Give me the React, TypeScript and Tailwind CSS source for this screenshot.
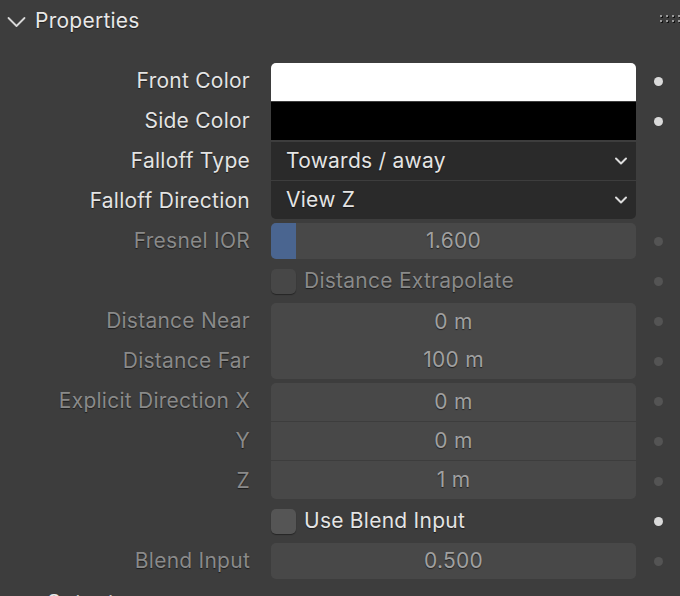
import { ChevronDown, ChevronRight } from "lucide-react";

type Pos = "single" | "first" | "mid" | "last";

const font = { fontFamily: "Inter, 'Noto Sans', sans-serif" };

const shadow = "[text-shadow:0_1px_1px_rgba(0,0,0,0.55)]";
const txt = "text-[21px] tracking-[0.25px]";

function rounding(pos: Pos) {
  if (pos === "single") return "h-[36px] rounded-[5px]";
  if (pos === "first") return "h-[38px] mt-[2px] rounded-t-[5px]";
  if (pos === "last") return "h-[38px] mb-[2px] rounded-b-[5px]";
  return "h-[38px]";
}

function Dot({ on }: { on?: boolean }) {
  return (
    <div className="w-[44px] flex justify-center">
      <div className={`w-[9px] h-[9px] rounded-full ${on ? "bg-[#dadada]" : "bg-[#545454]"}`} />
    </div>
  );
}

function Label({ text, on }: { text: string; on?: boolean }) {
  return (
    <div
      className={`w-[271px] pr-[21px] text-right whitespace-nowrap ${txt} ${shadow} ${on ? "text-[#e4e4e4]" : "text-[#8a8a8a]"}`}
    >
      {text}
    </div>
  );
}

function ColorRow({ label, color, pos }: { label: string; color: string; pos: Pos }) {
  return (
    <div className="flex items-center h-[40px]">
      <Label text={label} on />
      <div className={`w-[365px] ${rounding(pos)} ${color}`} />
      <Dot on />
    </div>
  );
}

function EnumRow({ label, value, pos }: { label: string; value: string; pos: Pos }) {
  return (
    <div className="flex items-center h-[40px]">
      <Label text={label} on />
      <div
        className={`w-[365px] ${rounding(pos)} bg-[#2a2a2a] flex items-center pl-[15px] pr-[5px] ${txt} text-[#e4e4e4] ${shadow}`}
      >
        <span className="flex-1">{value}</span>
        <ChevronDown className="w-[20px] h-[20px] text-[#dcdcdc]" strokeWidth={2.4} />
      </div>
      <div className="w-[44px]" />
    </div>
  );
}

function NumRow({ label, value, pos, fill }: { label: string; value: string; pos: Pos; fill?: number }) {
  return (
    <div className="flex items-center h-[40px]">
      <Label text={label} />
      <div
        className={`relative w-[365px] ${rounding(pos)} bg-[#484848] overflow-hidden flex items-center justify-center ${txt} text-[#a0a0a0] ${shadow}`}
      >
        {fill ? (
          <div className="absolute left-0 top-0 bottom-0 bg-[#4a6590]" style={{ width: fill }} />
        ) : null}
        <span className="relative">{value}</span>
      </div>
      <Dot />
    </div>
  );
}

function CheckRow({ label, on }: { label: string; on?: boolean }) {
  return (
    <div className="flex items-center h-[40px]">
      <div className="w-[271px]" />
      <div className="w-[365px] flex items-center gap-[8px]">
        <div
          className={`w-[25px] h-[25px] rounded-[5px] shadow-[0_1px_1px_rgba(0,0,0,0.4)] ${on ? "bg-[#555555]" : "bg-[#474747]"}`}
        />
        <span className={`${txt} ${shadow} ${on ? "text-[#e4e4e4]" : "text-[#8a8a8a]"}`}>{label}</span>
      </div>
      <Dot on={on} />
    </div>
  );
}

function Grip() {
  const cols = [660, 666, 672, 678];
  return (
    <div className="absolute right-0 top-[15px] w-[22px] h-[10px]">
      {[0, 5].map((y) =>
        cols.map((x) => (
          <div
            key={`${x}-${y}`}
            className="absolute w-[2px] h-[2px] bg-[#9a9a9a] shadow-[1px_1px_0_#111]"
            style={{ left: x - 658, top: y }}
          />
        ))
      )}
    </div>
  );
}

export default function App() {
  return (
    <div className="relative w-[680px] h-[596px] bg-[#3d3d3d] overflow-hidden" style={font}>
      <Grip />
      {/* panel header */}
      <div className="flex items-center h-[42px] pl-[7px] gap-[9px]">
        <svg width="19" height="12" viewBox="0 0 19 12" className="mt-[1px]">
          <polyline points="1.5,2 9.5,10 17.5,2" fill="none" stroke="#d8d8d8" strokeWidth="1.8" strokeLinecap="round" strokeLinejoin="round" />
        </svg>
        <span className={`${txt} text-[#e8e8e8] ${shadow}`}>Properties</span>
      </div>

      <div className="mt-[19px] flex flex-col">
        <ColorRow label="Front Color" color="bg-white" pos="first" />
        <ColorRow label="Side Color" color="bg-black" pos="mid" />
        <EnumRow label="Falloff Type" value="Towards / away" pos="mid" />
        <EnumRow label="Falloff Direction" value="View Z" pos="last" />
        <NumRow label="Fresnel IOR" value="1.600" pos="single" fill={25} />
        <CheckRow label="Distance Extrapolate" />
        <NumRow label="Distance Near" value="0 m" pos="first" />
        <NumRow label="Distance Far" value="100 m" pos="last" />
        <NumRow label="Explicit Direction X" value="0 m" pos="first" />
        <NumRow label="Y" value="0 m" pos="mid" />
        <NumRow label="Z" value="1 m" pos="last" />
        <CheckRow label="Use Blend Input" on />
        <NumRow label="Blend Input" value="0.500" pos="single" />
      </div>

      {/* collapsed sub panel */}
      <div className="flex items-center mt-[6px] pl-[18px] gap-[10px]">
        <ChevronRight className="w-[18px] h-[18px] text-[#d8d8d8]" strokeWidth={2} />
        <span className={`${txt} text-[#e8e8e8] ${shadow}`}>Output</span>
      </div>
    </div>
  );
}
